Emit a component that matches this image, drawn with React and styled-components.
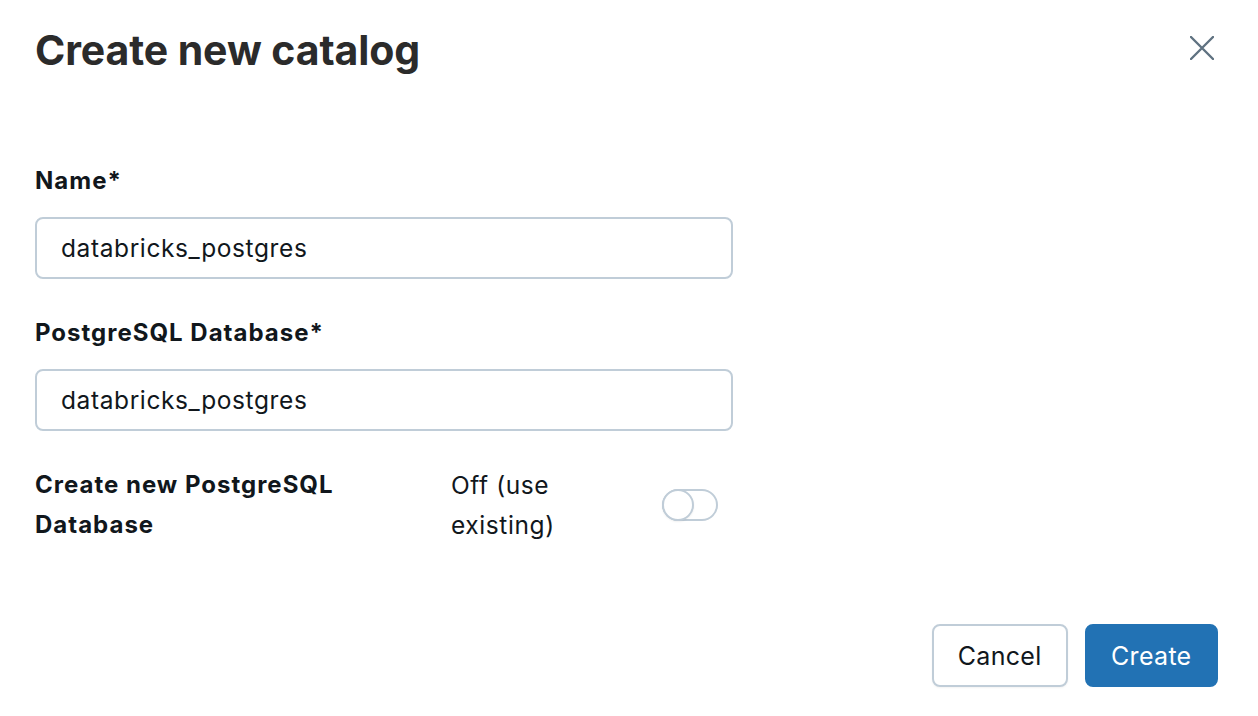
import React, { useState } from "react";
import styled, { createGlobalStyle } from "styled-components";

const GlobalStyle = createGlobalStyle`
  html, body {
    margin: 0;
    padding: 0;
    background: #ffffff;
  }
  body {
    font-family: Inter, "Noto Sans", "Liberation Sans", sans-serif;
    color: #11171c;
    -webkit-font-smoothing: antialiased;
  }
`;

const Dialog = styled.div`
  width: 1258px;
  height: 716px;
  box-sizing: border-box;
  padding: 26px 41px 0 35px;
  display: flex;
  flex-direction: column;
`;

const Header = styled.div`
  display: flex;
  align-items: center;
  justify-content: space-between;
  height: 48px;
`;

const Title = styled.h1`
  margin: 0;
  font-size: 41px;
  line-height: 48px;
  font-weight: 700;
  color: #2b2b2b;
  letter-spacing: -0.1px;
`;

const CloseButton = styled.button`
  border: 0;
  background: transparent;
  padding: 0;
  width: 30px;
  height: 30px;
  margin-right: 0;
  margin-bottom: 4px;
  display: flex;
  align-items: center;
  justify-content: center;
  color: #5f7281;
  cursor: pointer;
`;

const Form = styled.div`
  margin-top: 91px;
  width: 698px;
  display: flex;
  flex-direction: column;
`;

const Field = styled.div`
  display: flex;
  flex-direction: column;
  gap: 20px;
  margin-bottom: ${p => p.gapAfter || 0}px;
`;

const Label = styled.label`
  font-size: 24px;
  line-height: 32px;
  font-weight: 700;
  letter-spacing: 1px;
  color: #11171c;
`;

const Input = styled.input`
  box-sizing: border-box;
  height: 62px;
  width: 100%;
  border: 2px solid #c0cdd8;
  border-radius: 8px;
  padding: 0 24px;
  font-family: inherit;
  font-size: 24.5px;
  letter-spacing: 0.6px;
  color: #11171c;
  outline: none;
`;

const SwitchRow = styled.div`
  margin-top: 34px;
  display: grid;
  grid-template-columns: 416px 211px 56px;
  align-items: center;
`;

const RowText = styled.div`
  font-size: ${p => (p.bold ? 24 : 24.5)}px;
  letter-spacing: ${p => (p.bold ? 1 : 0.6)}px;
  line-height: 40px;
  font-weight: ${p => (p.bold ? 700 : 400)};
  color: #11171c;
  align-self: start;
  max-width: ${p => p.maxWidth || "none"};
`;

const Track = styled.button`
  position: relative;
  box-sizing: border-box;
  width: 56px;
  height: 32px;
  padding: 0;
  border: 2px solid #c0cdd8;
  border-radius: 16px;
  background: #ffffff;
  cursor: pointer;
`;

const Knob = styled.span`
  position: absolute;
  top: -2px;
  left: ${p => (p.$on ? "22px" : "-2px")};
  box-sizing: border-box;
  width: 32px;
  height: 32px;
  border-radius: 50%;
  border: 2px solid #c0cdd8;
  background: #ffffff;
  box-shadow: 0 1px 2px rgba(0, 0, 0, 0.06);
`;

const Footer = styled.div`
  margin-top: auto;
  margin-bottom: 29px;
  margin-right: -1px;
  display: flex;
  justify-content: flex-end;
  gap: 17px;
`;

const Button = styled.button`
  box-sizing: border-box;
  height: 63px;
  padding: 0 ${p => (p.$primary ? 24.5 : 24)}px;
  border-radius: 8px;
  font-family: inherit;
  font-size: 25px;
  letter-spacing: 0.3px;
  font-weight: 400;
  cursor: pointer;
  border: 2px solid ${p => (p.$primary ? "#2272b4" : "#c0cdd8")};
  background: ${p => (p.$primary ? "#2272b4" : "#ffffff")};
  color: ${p => (p.$primary ? "#ffffff" : "#11171c")};
  box-shadow: ${p => (p.$primary ? "none" : "0 1px 2px rgba(0,0,0,0.05)")};
`;

const CloseIcon = () => (
  <svg width="24" height="24" viewBox="0 0 24 24" fill="none">
    <path
      d="M1 1 L23 23 M23 1 L1 23"
      stroke="currentColor"
      strokeWidth="2.4"
      strokeLinecap="round"
    />
  </svg>
);

export default function App() {
  const [name, setName] = useState("databricks_postgres");
  const [db, setDb] = useState("databricks_postgres");
  const [on, setOn] = useState(false);

  return (
    <>
      <GlobalStyle />
      <Dialog>
        <Header>
          <Title>Create new catalog</Title>
          <CloseButton aria-label="Close">
            <CloseIcon />
          </CloseButton>
        </Header>
        <Form>
          <Field gapAfter={38}>
            <Label>Name*</Label>
            <Input value={name} onChange={e => setName(e.target.value)} />
          </Field>
          <Field>
            <Label>PostgreSQL Database*</Label>
            <Input value={db} onChange={e => setDb(e.target.value)} />
          </Field>
          <SwitchRow>
            <RowText bold maxWidth="345px">Create new PostgreSQL Database</RowText>
            <RowText maxWidth="130px">{on ? "On (create new)" : "Off (use existing)"}</RowText>
            <Track onClick={() => setOn(!on)} aria-pressed={on}>
              <Knob $on={on} />
            </Track>
          </SwitchRow>
        </Form>
        <Footer>
          <Button>Cancel</Button>
          <Button $primary>Create</Button>
        </Footer>
      </Dialog>
    </>
  );
}
